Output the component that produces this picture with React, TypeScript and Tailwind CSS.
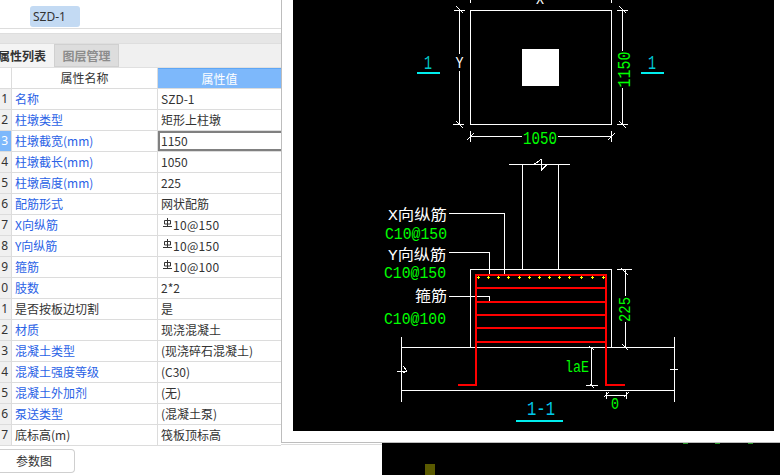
const rows = [
  { no: '1', name: '名称', value: 'SZD-1', blue: true },
  { no: '2', name: '柱墩类型', value: '矩形上柱墩', blue: true },
  { no: '3', name: '柱墩截宽(mm)', value: '1150', blue: true, active: true },
  { no: '4', name: '柱墩截长(mm)', value: '1050', blue: true },
  { no: '5', name: '柱墩高度(mm)', value: '225', blue: true },
  { no: '6', name: '配筋形式', value: '网状配筋', blue: true },
  { no: '7', name: 'X向纵筋', value: '10@150', blue: true, bar: true },
  { no: '8', name: 'Y向纵筋', value: '10@150', blue: true, bar: true },
  { no: '9', name: '箍筋', value: '10@100', blue: true, bar: true },
  { no: '10', name: '肢数', value: '2*2', blue: true },
  { no: '11', name: '是否按板边切割', value: '是' },
  { no: '12', name: '材质', value: '现浇混凝土', blue: true },
  { no: '13', name: '混凝土类型', value: '(现浇碎石混凝土)', blue: true },
  { no: '14', name: '混凝土强度等级', value: '(C30)', blue: true },
  { no: '15', name: '混凝土外加剂', value: '(无)', blue: true },
  { no: '16', name: '泵送类型', value: '(混凝土泵)', blue: true },
  { no: '17', name: '底标高(m)', value: '筏板顶标高' },
];

const whiteLines = [
  // plan view
  'M470.5 10.5H611.5V124.5H470.5Z',
  'M459.5 10V54M459.5 71V124M454 10.5H465M453 124.5H464',
  'M622.5 10V51M622.5 88V124M617 10.5H628M617 124.5H628',
  'M470 136.5H522M558 136.5H611M470.5 131V142M611.5 131V142',
  'M470.5 0V3M611.5 0V3',
  'M456 6L463 13M456 121L463 128M619 6L626 13M619 121L626 128M467 140L474 133M608 140L615 133',
  // section: column and pad
  'M509 164.5H570M522.5 164.5V269M558.5 164.5V269',
  'M534.5 164L541 159.5V170.5L547 164.5',
  'M470.5 347V269.5H611.5V347',
  // leaders
  'M449 213.5H504.5V276M449 252.5H489.5V275M449 296.5H489.5V301',
  // slab
  'M401.5 347.5H674M401.5 390.5H674M401.5 337V402M674.5 337V402',
  'M397 371.5H407M403 366L407 371M403 373L407 371M670 369.5H678',
  // dimensions
  'M625.5 269V296M625.5 322V347M617 269.5H632M621 268L628 275M622 344L628 350',
  'M591.5 347V385M586 385.5H598M589 346L594 350M590 384L594 388',
  'M606 395.5H626M606.5 392V399M626.5 392V399M604 397L609 392M624 397L629 392',
];

const redLines = [
  'M458 385H476V275H606V385H625',
  'M476 288H606M476 302H606M476 315H606M476 328H606M476 342H606',
];

const dotXs = [478, 488, 498, 508, 519, 529, 539, 549, 559, 569, 581, 592, 603];

const cadText = [
  { x: 540, y: 4, t: 'X', w: 8, fill: '#ffffff', size: 15 },
  { x: 540, y: 144, t: '1050', w: 34, fill: '#00ff00', size: 18 },
  { x: 459.5, y: 68, t: 'Y', w: 8, fill: '#ffffff', size: 16 },
  { x: 428, y: 69, t: '1', w: 8, fill: '#00c8c8', size: 21 },
  { x: 652, y: 69, t: '1', w: 8, fill: '#00c8d8', size: 21 },
  { x: 416, y: 239, t: 'C10@150', w: 62, fill: '#00ff00', size: 17 },
  { x: 415, y: 278, t: 'C10@150', w: 62, fill: '#00ff00', size: 17 },
  { x: 415, y: 324, t: 'C10@100', w: 62, fill: '#00ff00', size: 17 },
  { x: 577, y: 372, t: 'laE', w: 24, fill: '#00ff00', size: 16 },
  { x: 615, y: 409, t: '0', w: 8, fill: '#00ff00', size: 16 },
  { x: 541, y: 415, t: '1-1', w: 28, fill: '#00c8e8', size: 20 },
];

function RebarGlyph() {
  return (
    <svg width="9" height="10" viewBox="0 0 9 10" className="mb-1 shrink-0" fill="none" stroke="#333333">
      <path d="M4.5 0V9M1.5 2.5H7.5V6H1.5ZM0 8.5H9" />
    </svg>
  );
}

function Drawing() {
  return (
    <svg viewBox="293 0 481 431" className="h-full w-full bg-black" fill="none">
      <rect x="522" y="49" width="37" height="37" fill="#ffffff" />
      <g stroke="#ffffff" strokeWidth="1" shapeRendering="crispEdges">
        {whiteLines.map((d, i) => (
          <path key={i} d={d} />
        ))}
      </g>
      <g stroke="#ff0000" strokeWidth="2" shapeRendering="crispEdges">
        {redLines.map((d, i) => (
          <path key={i} d={d} />
        ))}
      </g>
      <g stroke="#ffff00" strokeWidth="1" shapeRendering="crispEdges">
        {dotXs.map((x) => (
          <path key={x} d={`M${x - 1.5} 277.5H${x + 1.5}M${x + 0.5} 276V279`} />
        ))}
      </g>
      <g fill="#00eeee">
        <rect x="417" y="72" width="23" height="2" />
        <rect x="641" y="72" width="23" height="2" />
        <rect x="516" y="420" width="47" height="2" />
      </g>
      <g className="font-['Liberation_Mono',monospace]">
        {cadText.map((c, i) => (
          <text key={i} x={c.x} y={c.y} fill={c.fill} fontSize={c.size} textAnchor="middle" textLength={c.w} lengthAdjust="spacingAndGlyphs">
            {c.t}
          </text>
        ))}
        <text transform="translate(630 69.5) rotate(-90)" fill="#00ff00" fontSize="18" textAnchor="middle" textLength="36" lengthAdjust="spacingAndGlyphs">
          1150
        </text>
        <text transform="translate(630 309.5) rotate(-90)" fill="#00ff00" fontSize="17" textAnchor="middle" textLength="25" lengthAdjust="spacingAndGlyphs">
          225
        </text>
      </g>
      <g fill="#ffffff" fontSize="15" textAnchor="end" className="font-['Liberation_Mono','Noto_Sans_CJK_SC',monospace]">
        <text x="447" y="220" textLength="59" lengthAdjust="spacingAndGlyphs">X向纵筋</text>
        <text x="446" y="260" textLength="58" lengthAdjust="spacingAndGlyphs">Y向纵筋</text>
        <text x="447" y="301" textLength="32" lengthAdjust="spacingAndGlyphs">箍筋</text>
      </g>
    </svg>
  );
}

export default function App() {
  return (
    <div className="flex h-[475px] w-[780px] overflow-hidden bg-white font-['Noto_Sans_CJK_SC','Noto_Sans',sans-serif] text-xs text-[#333333]">
      {/* left property panel */}
      <div className="flex w-[281px] shrink-0 flex-col">
        <div className="flex h-[29px] items-start border-b border-[#dddddd] pl-[30px] pt-[6px]">
          <span className="flex h-[21px] w-[50px] items-center rounded-[3px] bg-[#c3daf3] pl-[3px] font-['Noto_Sans',sans-serif]">SZD-1</span>
        </div>
        <div className="mt-[4px] h-[11px] border-y border-[#dedede] bg-[#e6e6e6]" />
        <div className="flex h-[24px] items-stretch border-b border-[#e0e0e0] bg-[#f0f0f0] text-xs">
          <div className="flex w-[54px] items-center justify-end overflow-hidden whitespace-nowrap bg-[#f4f4f4] pr-2 font-bold">
            属性列表
          </div>
          <div className="flex w-[65px] items-center justify-center border border-[#d0d0d0] bg-[#dddddd] font-bold text-[#8c8c8c]">图层管理</div>
        </div>
        <div className="flex h-[21px] border-b border-[#dcdcdc]">
          <div className="w-[12px] border-r border-[#dcdcdc] bg-white" />
          <div className="flex w-[146px] items-center justify-center border-r border-[#dcdcdc]">属性名称</div>
          <div className="flex flex-1 items-center justify-center border-t border-[#5ea6f5] bg-[#7db8fb] text-white">属性值</div>
        </div>
        {rows.map((r) => (
          <div key={r.no} className="flex h-[21px] shrink-0 border-b border-[#dcdcdc]">
            <div className={`flex w-[12px] shrink-0 items-center justify-end overflow-hidden border-r border-[#dcdcdc] pr-[3px] ${r.active ? 'bg-[#7db8fb] text-white' : 'bg-[#f0f0f0]'}`}>
              <span className="font-['Noto_Sans',sans-serif]">{r.no}</span>
            </div>
            <div className={`flex w-[146px] shrink-0 items-center border-r border-[#dcdcdc] pl-[3px] ${r.blue ? 'text-[#2a62e6]' : ''}`}>{r.name}</div>
            <div className={`flex flex-1 items-center gap-px ${r.active ? 'border-2 border-r-0 border-[#808080] pl-px' : r.bar ? 'pl-[5px] tracking-[0.3px]' : 'pl-[3px]'}`}>
              {r.bar && <RebarGlyph />}
              {r.value}
            </div>
          </div>
        ))}
        <div className="mt-[3px] flex h-[24px] w-[75px] items-center justify-end rounded-r-[4px] border border-l-0 border-[#cfcfcf] pr-[22px]">参数图</div>
      </div>

      {/* drawing dialog */}
      <div className="flex min-w-0 flex-1 flex-col">
        <div className="flex h-[443px] shrink-0 flex-col border-b border-l border-[#bdbdbd] bg-white pb-[11px] pl-[11px] pr-[6px]">
          <div className="min-h-0 flex-1">
            <Drawing />
          </div>
        </div>
        <div className="flex min-h-0 flex-1">
          <div className="h-[2px] w-[101px] border-b border-[#dcdcdc]" />
          <div className="relative flex flex-1 items-end bg-black pl-[43px]">
            <div className="h-[11px] w-[10px] bg-[#5a5a00]" />
            <div className="absolute left-[301px] top-0 h-px w-[5px] bg-[#2a9a2a]" />
            <div className="absolute left-[333px] top-0 h-px w-[5px] bg-[#2a9a2a]" />
            <div className="absolute left-[366px] top-0 h-px w-[5px] bg-[#2a9a2a]" />
          </div>
        </div>
      </div>
    </div>
  );
}
